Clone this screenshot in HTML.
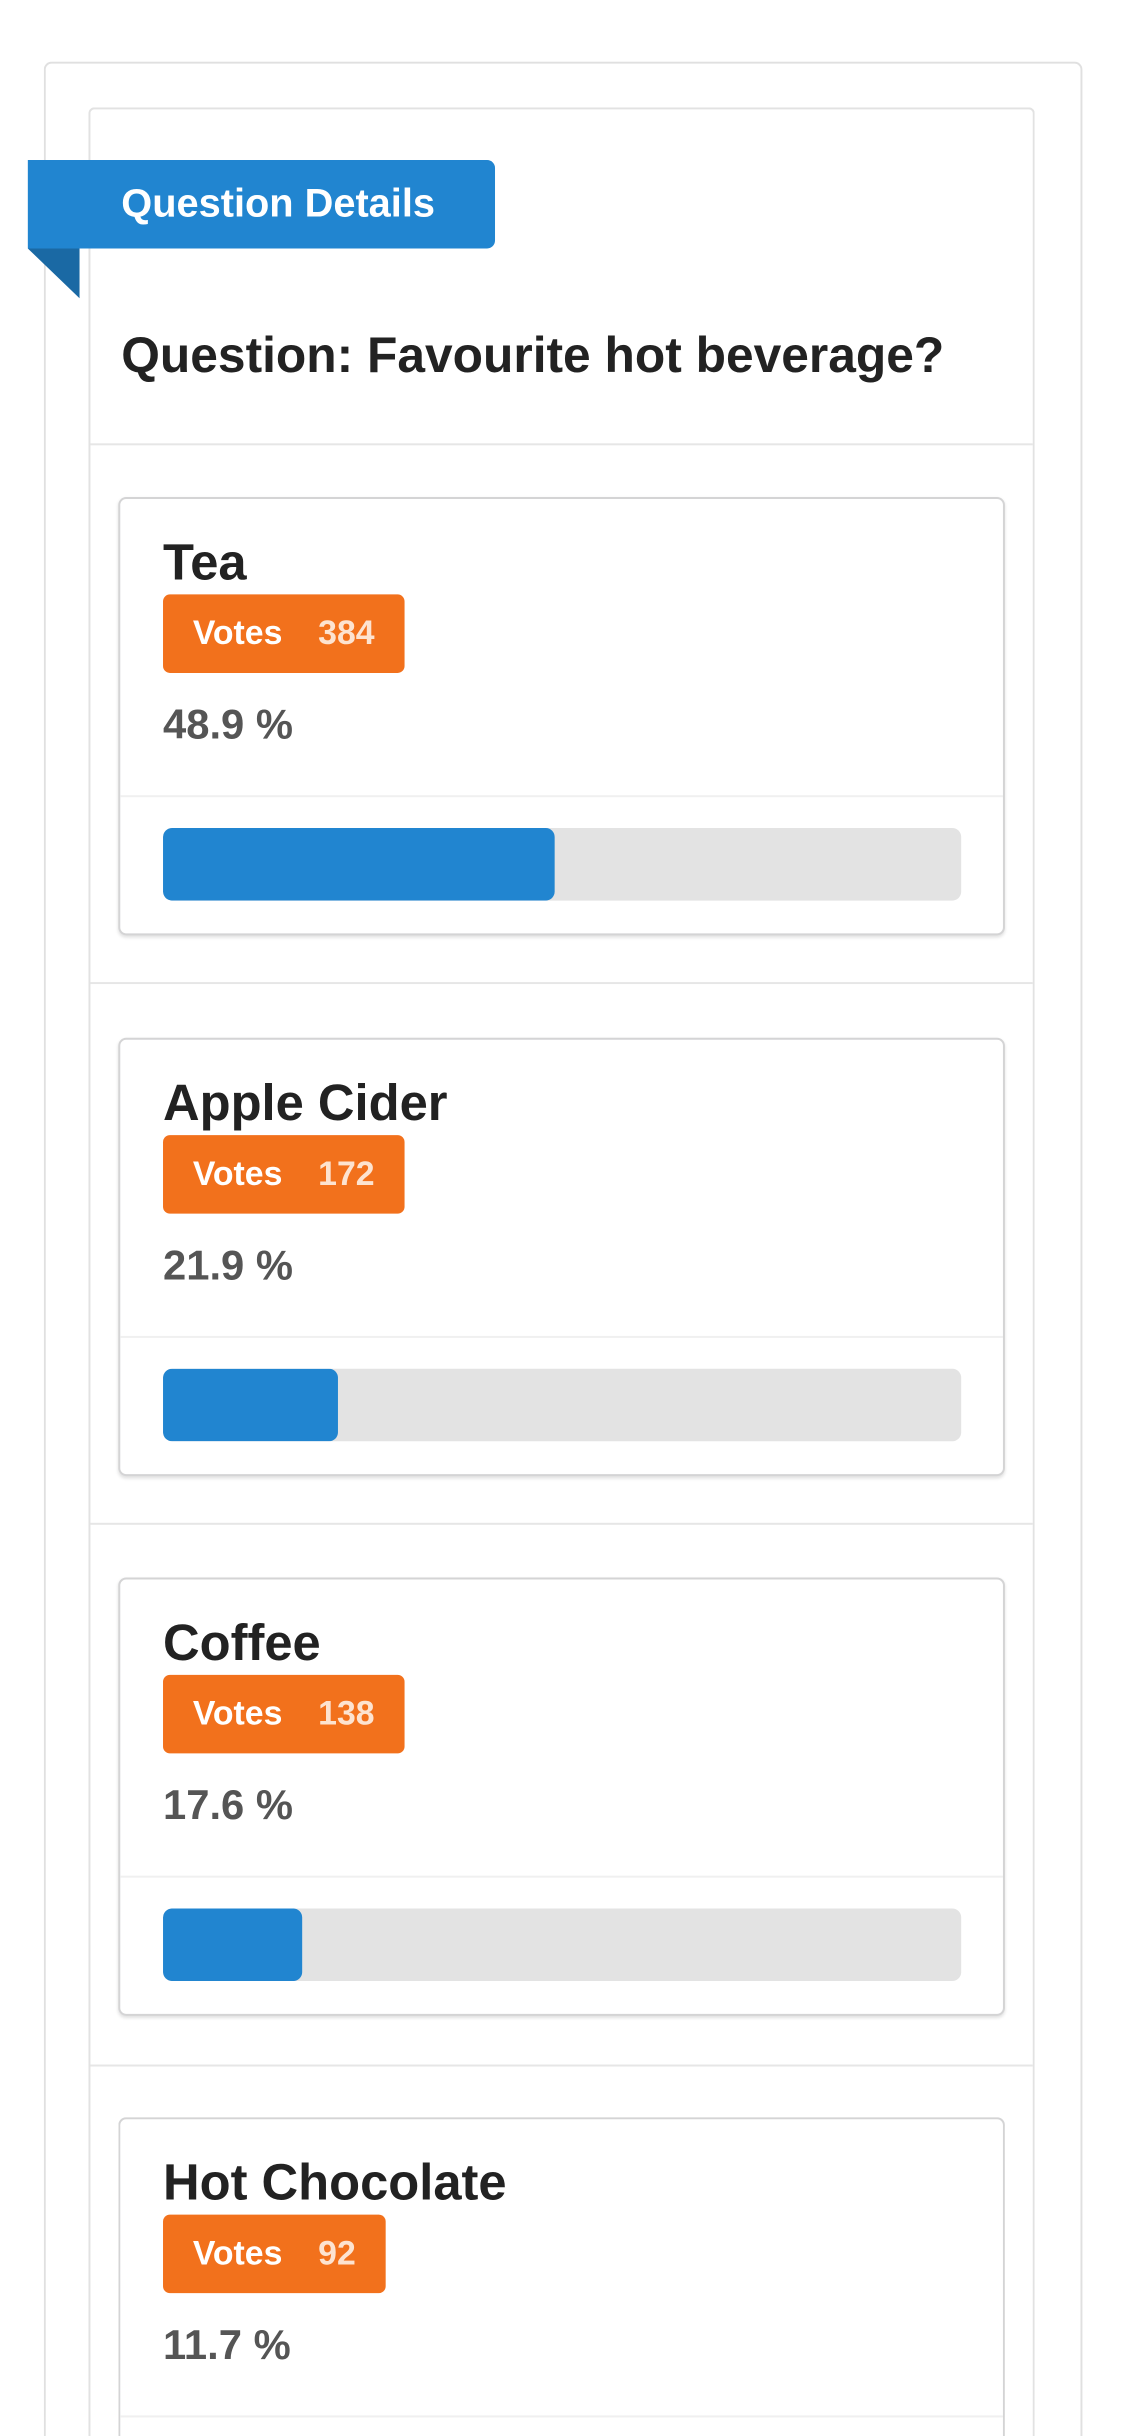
<!DOCTYPE html>
<html style="width:1125px;height:2436px;overflow:hidden"><head><meta charset="utf-8"><style>
*{margin:0;padding:0;box-sizing:border-box}
body{width:1125px;height:2436px;background:#fff;position:relative;overflow:hidden;font-family:"Liberation Sans",sans-serif}
.abs{position:absolute}
.outer{left:44px;top:62px;width:1045px;height:2400px;border:2px solid #e0e0e0;border-bottom:0;border-radius:8px 8px 0 0}
.inner{left:89px;top:108px;width:952px;height:2360px;border:2px solid #e2e2e2;border-bottom:0;border-radius:6px 6px 0 0}
.ribbon{left:28px;top:161px;width:470px;height:89px;background:#2185d0;border-radius:0 8px 8px 0;color:#fff;font-weight:bold;font-size:40px;line-height:89px;padding-left:94px;white-space:nowrap}
.fold{left:28px;top:250px;width:0;height:0;border-right:52px solid transparent;border-top:50px solid #1a69a4;transform:scaleX(-1)}
.q{left:122px;top:328px;font-size:50px;font-weight:bold;color:#222;white-space:nowrap}
.hr{left:91px;width:948px;height:2px;background:#e6e6e6}
.card{left:119px;width:892px;height:441px;border:2px solid #d4d4d5;border-radius:8px;box-shadow:0 2px 3px rgba(0,0,0,.12);background:#fff}
.title{position:absolute;left:43px;top:31px;font-size:51px;font-weight:bold;color:#222;white-space:nowrap;line-height:66px}
.badge{position:absolute;left:43px;top:96px;height:79px;background:#f2711c;border-radius:7px;color:#fff;font-weight:bold;font-size:34px;line-height:79px;padding:0 30px;white-space:nowrap}
.badge b{color:#fde3d0;margin-left:36px}
.pct{position:absolute;left:43px;top:202px;font-size:42px;font-weight:bold;color:#555;line-height:50px}
.div{position:absolute;left:0;right:0;top:298px;height:2px;background:#f0f0f0}
.bar{position:absolute;left:43px;top:331px;width:803px;height:73px;background:#e3e3e3;border-radius:9px;overflow:hidden}
.fill{height:100%;background:#2185d0;border-radius:9px}
.wrap{left:0;top:0;width:1125px;height:2470px;transform:scale(0.994);transform-origin:0 0}
.clip{left:0;top:0;width:1125px;height:2436px;overflow:hidden}
</style></head><body>
<div class="abs clip"><div class="abs wrap">
<div class="abs outer"></div>
<div class="abs inner"></div>
<div class="abs ribbon">Question Details</div>
<div class="abs fold"></div>
<div class="abs q">Question: Favourite hot beverage?</div>
<div class="abs hr" style="top:446px"></div>

<div class="abs card" style="top:500px"><div class="title">Tea</div><div class="badge">Votes<b>384</b></div><div class="pct">48.9 %</div><div class="div"></div><div class="bar"><div class="fill" style="width:394px"></div></div></div>
<div class="abs hr" style="top:988px"></div>

<div class="abs card" style="top:1044px"><div class="title">Apple Cider</div><div class="badge">Votes<b>172</b></div><div class="pct">21.9 %</div><div class="div"></div><div class="bar"><div class="fill" style="width:176px"></div></div></div>
<div class="abs hr" style="top:1532px"></div>

<div class="abs card" style="top:1587px"><div class="title">Coffee</div><div class="badge">Votes<b>138</b></div><div class="pct">17.6 %</div><div class="div"></div><div class="bar"><div class="fill" style="width:140px"></div></div></div>
<div class="abs hr" style="top:2077px"></div>

<div class="abs card" style="top:2130px;height:340px;border-bottom:0;border-radius:8px 8px 0 0;box-shadow:none"><div class="title">Hot Chocolate</div><div class="badge">Votes<b>92</b></div><div class="pct">11.7 %</div><div class="div"></div></div>
</div></div>
</body></html>
